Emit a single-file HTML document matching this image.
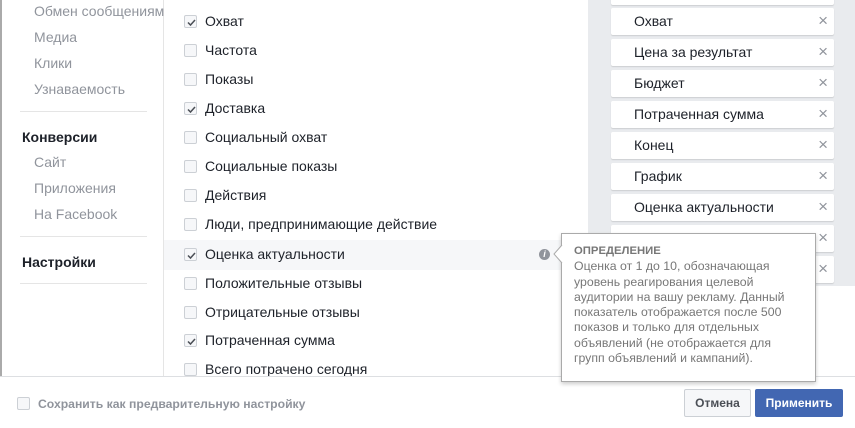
<!DOCTYPE html>
<html><head><meta charset="utf-8"><style>
*{box-sizing:border-box;margin:0;padding:0}
body{width:855px;height:428px;overflow:hidden;background:#fff;font-family:"Liberation Sans","Noto Sans CJK SC",sans-serif;position:relative;color:#1d2129}
.abs{position:absolute}
.sl{position:absolute;left:34px;font-size:14px;color:#90949c;white-space:nowrap}
.sh{position:absolute;left:22px;font-size:14px;font-weight:bold;color:#1d2129}
.hr{position:absolute;left:20px;width:127px;height:1px;background:#e5e5e5}
.row{position:absolute;left:164px;width:421px;height:29px}
.cb{position:absolute;left:20px;top:8px;width:13px;height:13px;border:1px solid #ccd0d5;border-radius:2px;background:#f6f7f9}
.cb svg{position:absolute;left:1px;top:1px}
.row span{position:absolute;left:41px;top:6px;font-size:14px;color:#1d2129;white-space:nowrap}
.it{position:absolute;left:611px;width:223px;height:27px;background:#fff;border-radius:2px;box-shadow:0 1px 1px rgba(0,0,0,.12)}
.it span{position:absolute;left:23px;top:5px;font-size:14px;color:#1d2129;white-space:nowrap}
.it b{position:absolute;right:6px;top:3px;font-size:17px;color:#90949c;font-weight:normal}
</style></head><body>
<div class="abs" style="left:0;top:0;width:2px;height:376px;background:#aaa"></div>
<div class="abs" style="left:163px;top:0;width:1px;height:376px;background:#e5e5e5"></div>
<div class="sl" style="top:3px">Обмен сообщениям</div>
<div class="sl" style="top:29px">Медиа</div>
<div class="sl" style="top:55px">Клики</div>
<div class="sl" style="top:81px">Узнаваемость</div>
<div class="hr" style="top:111px"></div>
<div class="sh" style="top:129px">Конверсии</div>
<div class="sl" style="top:154px">Сайт</div>
<div class="sl" style="top:180px">Приложения</div>
<div class="sl" style="top:206px">На Facebook</div>
<div class="hr" style="top:236px"></div>
<div class="sh" style="top:254px">Настройки</div>
<div class="hr" style="top:283px"></div>

<div class="abs" style="left:164px;top:240px;width:421px;height:30px;background:#f6f7f9"></div>
<div class="row" style="top:7px"><div class="cb"><svg width="11" height="11"><path d="M2 5.5l2.5 2.5 4.5-5" stroke="#4b4f56" stroke-width="1.5" fill="none"/></svg></div><span>Охват</span></div>
<div class="row" style="top:36px"><div class="cb"></div><span>Частота</span></div>
<div class="row" style="top:65px"><div class="cb"></div><span>Показы</span></div>
<div class="row" style="top:94px"><div class="cb"><svg width="11" height="11"><path d="M2 5.5l2.5 2.5 4.5-5" stroke="#4b4f56" stroke-width="1.5" fill="none"/></svg></div><span>Доставка</span></div>
<div class="row" style="top:123px"><div class="cb"></div><span>Социальный охват</span></div>
<div class="row" style="top:152px"><div class="cb"></div><span>Социальные показы</span></div>
<div class="row" style="top:181px"><div class="cb"></div><span>Действия</span></div>
<div class="row" style="top:210px"><div class="cb"></div><span>Люди, предпринимающие действие</span></div>
<div class="row" style="top:240px"><div class="cb"><svg width="11" height="11"><path d="M2 5.5l2.5 2.5 4.5-5" stroke="#4b4f56" stroke-width="1.5" fill="none"/></svg></div><span>Оценка актуальности</span></div>
<div class="row" style="top:269px"><div class="cb"></div><span>Положительные отзывы</span></div>
<div class="row" style="top:298px"><div class="cb"></div><span>Отрицательные отзывы</span></div>
<div class="row" style="top:326px"><div class="cb"><svg width="11" height="11"><path d="M2 5.5l2.5 2.5 4.5-5" stroke="#4b4f56" stroke-width="1.5" fill="none"/></svg></div><span>Потраченная сумма</span></div>
<div class="row" style="top:355px"><div class="cb"></div><span>Всего потрачено сегодня</span></div>
<div class="abs" style="left:539px;top:249px;width:11px;height:11px;border-radius:50%;background:#90949c;color:#fff;font-size:9px;font-weight:bold;text-align:center;line-height:11px;font-style:italic">i</div>

<div class="abs" style="left:588px;top:0;width:267px;height:286px;background:#e9ebee"></div>
<div class="it" style="top:-22px"></div>
<div class="it" style="top:8px"><span>Охват</span><b>×</b></div>
<div class="it" style="top:39px"><span>Цена за результат</span><b>×</b></div>
<div class="it" style="top:70px"><span>Бюджет</span><b>×</b></div>
<div class="it" style="top:101px"><span>Потраченная сумма</span><b>×</b></div>
<div class="it" style="top:132px"><span>Конец</span><b>×</b></div>
<div class="it" style="top:163px"><span>График</span><b>×</b></div>
<div class="it" style="top:194px"><span>Оценка актуальности</span><b>×</b></div>
<div class="it" style="top:225px"><span></span><b>×</b></div>
<div class="it" style="top:256px"><span></span><b>×</b></div>

<div class="abs" style="left:0;top:376px;width:855px;height:52px;background:#fff;border-top:1px solid #dddfe2"></div>
<div class="abs" style="left:17px;top:397px;width:13px;height:13px;border:1px solid #ccd0d5;border-radius:2px;background:#f6f7f9"></div>
<div class="abs" style="left:38px;top:397px;font-size:12.2px;font-weight:bold;color:#90949c">Сохранить как предварительную настройку</div>
<div class="abs" style="left:684px;top:389px;width:67px;height:28px;border:1px solid #ccd0d5;border-radius:2px;background:#f6f7f9;font-size:12px;font-weight:bold;color:#4b4f56;text-align:center;line-height:26px">Отмена</div>
<div class="abs" style="left:755px;top:389px;width:88px;height:28px;border-radius:2px;background:#4267b2;font-size:12px;font-weight:bold;color:#fff;text-align:center;line-height:28px">Применить</div>

<div class="abs" style="left:561px;top:233px;width:255px;height:149px;background:#fff;border:1px solid #aaa;box-shadow:0 2px 4px rgba(0,0,0,.2)"></div>
<svg class="abs" style="left:553px;top:245px" width="10" height="18"><path d="M9 0L1 9l8 9" fill="#fff" stroke="#aaa"/></svg>
<div class="abs" style="left:574px;top:243px;width:242px;font-size:12.3px;line-height:15.3px;color:#777"><b style="font-size:11.3px">ОПРЕДЕЛЕНИЕ</b><br>Оценка от 1 до 10, обозначающая<br>уровень реагирования целевой<br>аудитории на вашу рекламу. Данный<br>показатель отображается после 500<br>показов и только для отдельных<br>объявлений (не отображается для<br>групп объявлений и кампаний).</div>
</body></html>
